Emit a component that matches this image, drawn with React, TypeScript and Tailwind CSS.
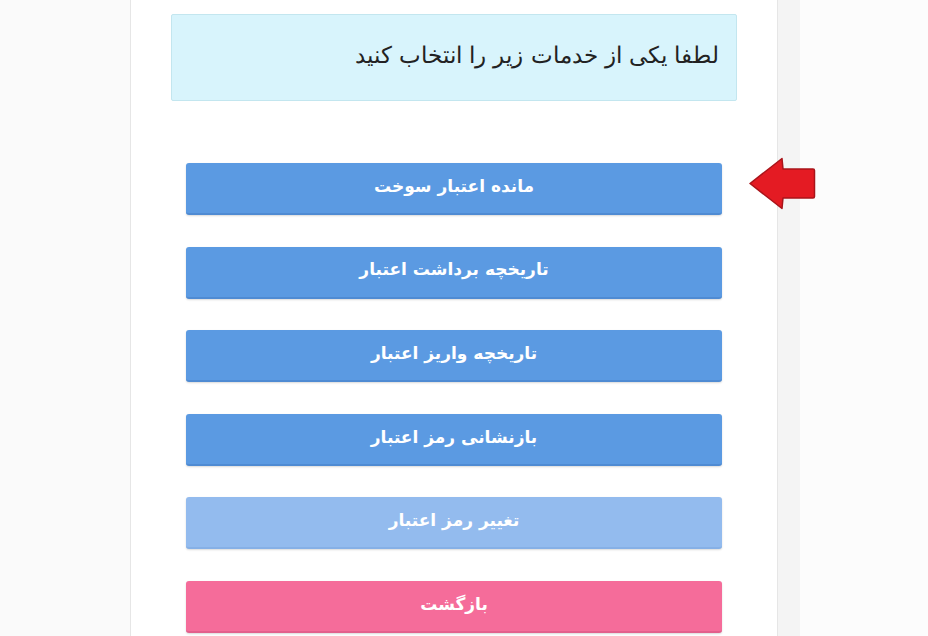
import React from "react";

const buttons = [
  { label: "مانده اعتبار سوخت", cls: "bg-[#5b9ae2] border-[#4f8bd3]" },
  { label: "تاریخچه برداشت اعتبار", cls: "bg-[#5b9ae2] border-[#4f8bd3]" },
  { label: "تاریخچه واریز اعتبار", cls: "bg-[#5b9ae2] border-[#4f8bd3]" },
  { label: "بازنشانی رمز اعتبار", cls: "bg-[#5b9ae2] border-[#4f8bd3]" },
  { label: "تغییر رمز اعتبار", cls: "bg-[#93bbee] border-[#86b0e6]" },
  { label: "بازگشت", cls: "bg-[#f56c9a] border-[#e35f8c]" },
];

export default function App() {
  return (
    <div
      className="relative w-[928px] h-[636px] overflow-hidden bg-[#fafafa] flex"
      style={{ fontFamily: '"DejaVu Sans", sans-serif' }}
    >
      <div className="w-[130px] shrink-0" />
      <div className="w-[648px] shrink-0 bg-white border-x border-[#e6e6e6] flex flex-col pt-[14px]">
        <div
          dir="rtl"
          className="mx-[40px] h-[87px] bg-[#d8f4fc] border border-[#c3e6ef] rounded-[2px] flex items-center pr-[17px] pb-[4px] text-[22.5px] text-[#222] font-light"
        >
          لطفا یکی از خدمات زیر را انتخاب کنید
        </div>
        <div className="mt-[62px] mx-[55px] flex flex-col gap-[31.6px]">
          {buttons.map((b) => (
            <div
              key={b.label}
              dir="rtl"
              className={`h-[52px] rounded-[3px] border-b-2 ${b.cls} flex items-center justify-center pb-[3px] text-white font-bold text-[17px] shadow-[0_1px_2px_rgba(0,0,0,0.15)]`}
            >
              {b.label}
            </div>
          ))}
        </div>
      </div>
      <div className="w-[22px] shrink-0 bg-[#f4f4f4]" />
      <div className="flex-1 bg-[#fcfcfc]" />
      <svg
        className="absolute left-[748px] top-[157px]"
        width="68"
        height="53"
        viewBox="0 0 68 53"
      >
        <path
          d="M2 26.5 L34 1.5 L35 12 L65 12 Q66.5 12 66.5 13.5 L66.5 39.5 Q66.5 41 65 41 L35 41 L34 51.5 Z"
          fill="#e41b23"
          stroke="#a9141a"
          strokeWidth="1.5"
          strokeLinejoin="round"
        />
      </svg>
    </div>
  );
}
